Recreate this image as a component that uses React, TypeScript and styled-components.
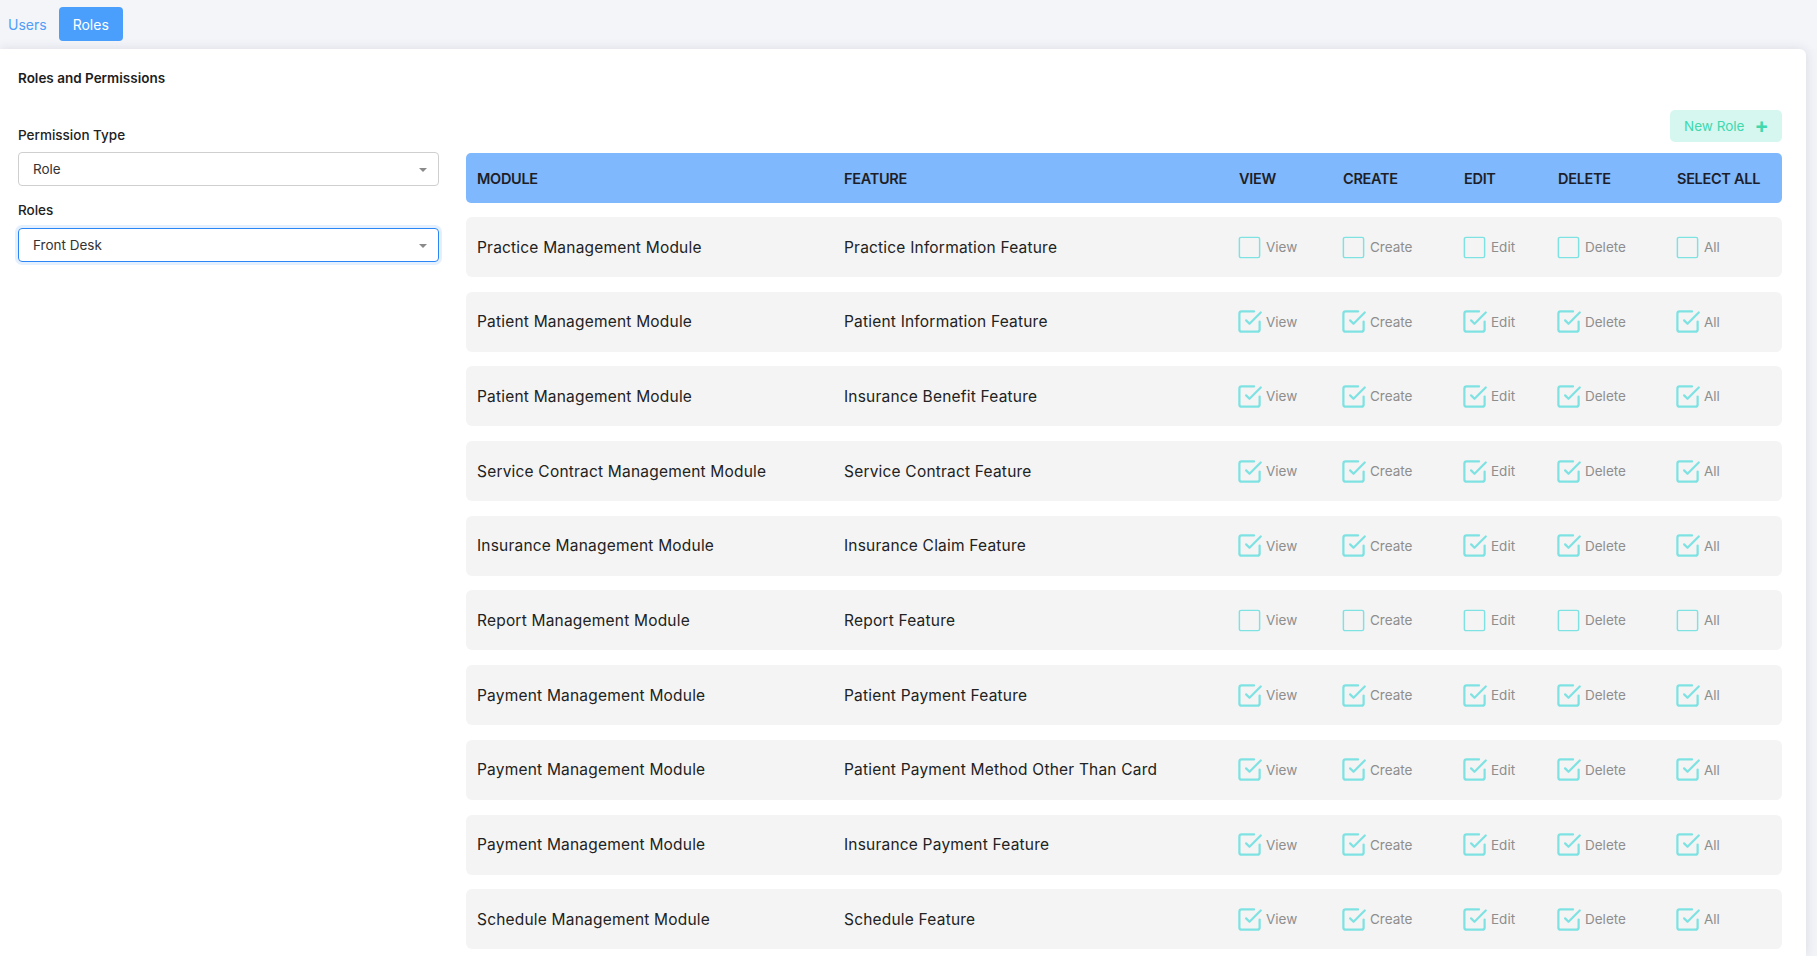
import React from "react";
import styled, { createGlobalStyle } from "styled-components";

const GlobalStyle = createGlobalStyle`
  html, body {
    margin: 0;
    padding: 0;
    height: 100%;
    overflow: hidden;
    background: #f3f4f8;
    font-family: "Inter", "Noto Sans", "Liberation Sans", sans-serif;
    color: #222;
  }
  * { box-sizing: border-box; }
`;

interface IPermissionRow {
  module: string;
  feature: string;
  enabled: boolean;
}

const rows: IPermissionRow[] = [
  { module: "Practice Management Module", feature: "Practice Information Feature", enabled: false },
  { module: "Patient Management Module", feature: "Patient Information Feature", enabled: true },
  { module: "Patient Management Module", feature: "Insurance Benefit Feature", enabled: true },
  { module: "Service Contract Management Module", feature: "Service Contract Feature", enabled: true },
  { module: "Insurance Management Module", feature: "Insurance Claim Feature", enabled: true },
  { module: "Report Management Module", feature: "Report Feature", enabled: false },
  { module: "Payment Management Module", feature: "Patient Payment Feature", enabled: true },
  { module: "Payment Management Module", feature: "Patient Payment Method Other Than Card", enabled: true },
  { module: "Payment Management Module", feature: "Insurance Payment Feature", enabled: true },
  { module: "Schedule Management Module", feature: "Schedule Feature", enabled: true },
];

const actions = ["View", "Create", "Edit", "Delete", "All"];

const CheckIcon: React.FC<{ checked: boolean }> = ({ checked }) => (
  <CheckSvg viewBox="0 0 24 24" fill="none" stroke="#7fe2e2" strokeLinecap="round" strokeLinejoin="round">
    {checked ? (
      <>
        <polyline points="9 11 12 14 22 4" strokeWidth="2" />
        <path d="M21 12v7a2 2 0 0 1-2 2H5a2 2 0 0 1-2-2V5a2 2 0 0 1 2-2h11" strokeWidth="2" />
      </>
    ) : (
      <rect x="3" y="3" width="18" height="18" rx="1.5" strokeWidth="1.3" />
    )}
  </CheckSvg>
);

const App: React.FC = () => {
  return (
    <>
      <GlobalStyle />
      <TopBar>
        <TabLink>Users</TabLink>
        <TabButton>Roles</TabButton>
      </TopBar>
      <Card>
        <Title>Roles and Permissions</Title>
        <Body>
          <Sidebar>
            <FieldLabel>Permission Type</FieldLabel>
            <Select>
              <span>Role</span>
              <Caret />
            </Select>
            <FieldLabel spaced>Roles</FieldLabel>
            <Select focused>
              <span>Front Desk</span>
              <Caret />
            </Select>
          </Sidebar>
          <Main>
            <ActionBar>
              <NewRoleButton>
                New Role <Plus>+</Plus>
              </NewRoleButton>
            </ActionBar>
            <HeaderRow>
              <HeadCell>Module</HeadCell>
              <HeadCell>Feature</HeadCell>
              <HeadCell>View</HeadCell>
              <HeadCell>Create</HeadCell>
              <HeadCell>Edit</HeadCell>
              <HeadCell>Delete</HeadCell>
              <HeadCell>Select All</HeadCell>
            </HeaderRow>
            <RowList>
              {rows.map((row, i) => (
                <Row key={i}>
                  <Cell>{row.module}</Cell>
                  <Cell>{row.feature}</Cell>
                  {actions.map((a) => (
                    <CheckCell key={a}>
                      <CheckIcon checked={row.enabled} />
                      <CheckLabel>{a}</CheckLabel>
                    </CheckCell>
                  ))}
                </Row>
              ))}
            </RowList>
          </Main>
        </Body>
      </Card>
    </>
  );
};

export default App;

const TopBar = styled.div`
  height: 49px;
  display: flex;
  align-items: center;
  gap: 12px;
  padding-left: 8px;
  background: #f4f5f9;
`;

const TabLink = styled.span`
  font-size: 14px;
  color: #4f9ef8;
`;

const TabButton = styled.button`
  height: 34px;
  padding: 0 14px;
  border: none;
  border-radius: 4px;
  background: #4a9efc;
  color: #fff;
  font-family: inherit;
  font-size: 14px;
  margin-top: -1px;
`;

const Card = styled.div`
  margin-right: 11px;
  height: calc(100vh - 49px);
  background: #fff;
  border-top-right-radius: 6px;
  box-shadow: 0 0 12px rgba(30, 40, 80, 0.12);
  padding: 20px 24px 0 18px;
`;

const Title = styled.div`
  font-size: 13.5px;
  line-height: 18px;
  font-weight: 600;
  color: #1d1d1d;
`;

const Body = styled.div`
  display: grid;
  grid-template-columns: 421px 1fr;
  column-gap: 27px;
  margin-top: 22px;
`;

const Sidebar = styled.div`
  padding-top: 16px;
  display: flex;
  flex-direction: column;
`;

const FieldLabel = styled.div<{ spaced?: boolean }>`
  font-size: 13.5px;
  line-height: 20px;
  font-weight: 500;
  color: #222;
  margin-top: ${(p) => (p.spaced ? "14px" : "0")};
  margin-bottom: ${(p) => (p.spaced ? "8px" : "7px")};
`;

const Select = styled.div<{ focused?: boolean }>`
  position: relative;
  height: 34px;
  display: flex;
  align-items: center;
  padding-left: 14px;
  border: 1px solid ${(p) => (p.focused ? "#2b86f5" : "#cfcfcf")};
  border-radius: 4px;
  box-shadow: ${(p) => (p.focused ? "0 0 0 3px rgba(43, 134, 245, 0.12)" : "none")};
  font-size: 13.5px;
  color: #333;
`;

const Caret = styled.span`
  position: absolute;
  right: 11px;
  top: 15px;
  width: 0;
  height: 0;
  border-left: 4px solid transparent;
  border-right: 4px solid transparent;
  border-top: 4px solid #8a8a8a;
`;

const Main = styled.div`
  display: flex;
  flex-direction: column;
`;

const ActionBar = styled.div`
  display: flex;
  justify-content: flex-end;
  margin-top: 1px;
  margin-bottom: 11px;
`;

const NewRoleButton = styled.button`
  height: 32px;
  width: 112px;
  display: flex;
  align-items: center;
  gap: 10px;
  padding: 0 0 0 14px;
  border: none;
  border-radius: 5px;
  background: #d5f7ef;
  color: #41d8ae;
  font-family: inherit;
  font-size: 13.5px;
`;

const Plus = styled.span`
  font-size: 21px;
  font-weight: 700;
  line-height: 1;
  margin-top: -2px;
`;

const columns = "367px 395px 104px 121px 94px 119px 1fr";

const HeaderRow = styled.div`
  display: grid;
  grid-template-columns: ${columns};
  align-items: center;
  height: 50px;
  padding-left: 11px;
  background: #7fb8fc;
  border-radius: 5px;
`;

const HeadCell = styled.div`
  font-size: 14.5px;
  font-weight: 600;
  text-transform: uppercase;
  letter-spacing: -0.3px;
  color: #1e1e28;
`;

const RowList = styled.div`
  display: flex;
  flex-direction: column;
  gap: 14.7px;
  margin-top: 14px;
`;

const Row = styled.div`
  display: grid;
  grid-template-columns: ${columns};
  align-items: center;
  height: 60px;
  padding-left: 11px;
  background: #f4f4f4;
  border-radius: 6px;
`;

const Cell = styled.div`
  font-size: 15.5px;
  letter-spacing: 0.2px;
  color: #222;
  white-space: nowrap;
`;

const CheckCell = styled.div`
  display: flex;
  align-items: center;
  gap: 3px;
`;

const CheckSvg = styled.svg`
  width: 27px;
  height: 27px;
  margin-left: -3px;
  flex: none;
`;

const CheckLabel = styled.span`
  font-size: 13.5px;
  color: #8e8e8e;
`;
